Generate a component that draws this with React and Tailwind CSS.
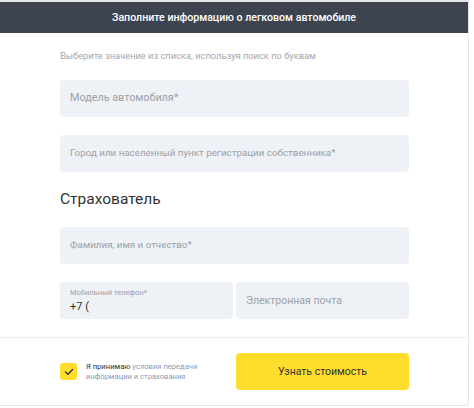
export default function App() {
  const font = { fontFamily: "Roboto, 'Noto Sans', sans-serif" };
  return (
    <div className="w-[474px] h-[408px] bg-white" style={font}>
      <div className="w-[469px] border-t-2 border-t-[#e2e4e8] border-r border-b border-[#e6e6e6] rounded-br-[4px] bg-white">
        <div className="h-[31px] bg-[#3d4450] flex items-center justify-center text-white text-[10.6px] font-medium">
          Заполните информацию о легковом автомобиле
        </div>
        <div className="pl-[60px] pr-[59px] pt-[16px] pb-[18px] flex flex-col">
          <div className="text-[9.3px] leading-[14px] text-[#a3a7ad]">
            Выберите значение из списка, используя поиск по буквам
          </div>
          <div className="mt-[17px] h-[37px] rounded-[4px] bg-[#eef1f5] flex items-center px-[10px] text-[10.8px] text-[#9ca1a8]">
            Модель автомобиля*
          </div>
          <div className="mt-[18px] h-[37px] rounded-[4px] bg-[#eef1f5] flex items-center px-[10px] text-[9.8px] text-[#9ca1a8]">
            Город или населенный пункт регистрации собственника*
          </div>
          <div className="mt-[16px] h-[24px] flex items-center text-[15.5px] text-[#333333]">
            Страхователь
          </div>
          <div className="mt-[15px] h-[37px] rounded-[4px] bg-[#eef1f5] flex items-center px-[10px] text-[9.8px] text-[#9ca1a8]">
            Фамилия, имя и отчество*
          </div>
          <div className="mt-[18px] flex gap-[3px]">
            <div className="w-[173px] h-[37px] rounded-[4px] bg-[#eef1f5] flex flex-col justify-center px-[10px]">
              <div className="text-[7.5px] leading-[10px] text-[#9ca1a8]">Мобильный телефон*</div>
              <div className="text-[11px] leading-[14px] text-[#333333] mt-[2px]">+7 (</div>
            </div>
            <div className="flex-1 h-[37px] rounded-[4px] bg-[#eef1f5] flex items-center px-[10px] text-[10.5px] text-[#9ca1a8]">
              Электронная почта
            </div>
          </div>
        </div>
        <div className="border-t border-[#ececec] pl-[60px] pr-[59px] pt-[15px] pb-[15px] flex items-center">
          <div className="flex items-center flex-1">
            <div className="w-[17px] h-[17px] rounded-[3px] bg-[#ffdd2d] flex items-center justify-center">
              <svg width="10" height="8" viewBox="0 0 10 8" fill="none">
                <path d="M1.5 4 L4 6.3 L8.5 1.5" stroke="#333" strokeWidth="1.4" strokeLinecap="round" strokeLinejoin="round" />
              </svg>
            </div>
            <div className="ml-[9px] text-[7.6px] leading-[10px]">
              <span className="text-[#333333]">Я принимаю </span>
              <span className="text-[#8a9bb3]">условия передачи</span>
              <br />
              <span className="text-[#8a9bb3]">информации и страхования</span>
            </div>
          </div>
          <div className="w-[173px] h-[37px] rounded-[4px] bg-[#ffdd2d] flex items-center justify-center text-[10.5px] text-[#333333]">
            Узнать стоимость
          </div>
        </div>
      </div>
    </div>
  );
}
